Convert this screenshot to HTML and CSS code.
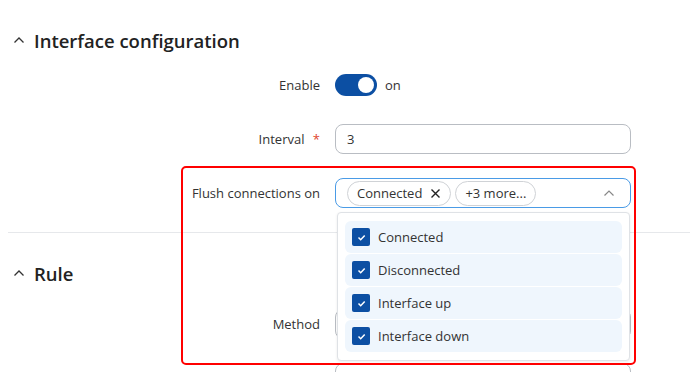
FILE: index.html
```html
<!DOCTYPE html>
<html lang="en">
<head>
    <meta charset="UTF-8">
    <meta name="viewport" content="width=device-width, initial-scale=1.0">
    <title>Interface configuration</title>
    <link rel="stylesheet" href="styles.css">
</head>
<body>
    <div class="page">
        <section class="section">
            <h2 class="section-title">
                <svg class="chevron" width="12" height="8" viewBox="0 0 12 8"><path d="M1.5 6.5 L6 2 L10.5 6.5" fill="none" stroke="#333" stroke-width="1.3"/></svg>
                Interface configuration
            </h2>

            <div class="form-row">
                <label class="form-label">Enable</label>
                <div class="form-control toggle-wrap">
                    <span class="toggle"><span class="knob"></span></span>
                    <span class="toggle-text">on</span>
                </div>
            </div>

            <div class="form-row">
                <label class="form-label">Interval <span class="required">*</span></label>
                <div class="form-control">
                    <div class="input">3</div>
                </div>
            </div>

            <div class="form-row">
                <label class="form-label">Flush connections on</label>
                <div class="form-control">
                    <div class="input multiselect">
                        <span class="chip">Connected
                            <svg width="11" height="11" viewBox="0 0 11 11"><path d="M1.5 1.5 L9.5 9.5 M9.5 1.5 L1.5 9.5" stroke="#222" stroke-width="1.4"/></svg>
                        </span>
                        <span class="chip">+3 more...</span>
                        <svg class="select-arrow" width="12" height="8" viewBox="0 0 12 8"><path d="M1.5 6.5 L6 2 L10.5 6.5" fill="none" stroke="#888" stroke-width="1.2"/></svg>
                    </div>
                </div>
            </div>
        </section>

        <section class="section section-rule">
            <h2 class="section-title">
                <svg class="chevron" width="12" height="8" viewBox="0 0 12 8"><path d="M1.5 6.5 L6 2 L10.5 6.5" fill="none" stroke="#333" stroke-width="1.3"/></svg>
                Rule
            </h2>

            <div class="form-row">
                <label class="form-label">Method</label>
                <div class="form-control">
                    <div class="input"></div>
                </div>
            </div>

            <div class="form-row">
                <label class="form-label"></label>
                <div class="form-control">
                    <div class="input"></div>
                </div>
            </div>
        </section>

        <div class="dropdown">
            <div class="option"><span class="checkbox"><svg width="11" height="9" viewBox="0 0 11 9"><path d="M2.5 4.5 L4.7 6.7 L8.7 2.5" fill="none" stroke="#fff" stroke-width="1.5"/></svg></span>Connected</div>
            <div class="option"><span class="checkbox"><svg width="11" height="9" viewBox="0 0 11 9"><path d="M2.5 4.5 L4.7 6.7 L8.7 2.5" fill="none" stroke="#fff" stroke-width="1.5"/></svg></span>Disconnected</div>
            <div class="option"><span class="checkbox"><svg width="11" height="9" viewBox="0 0 11 9"><path d="M2.5 4.5 L4.7 6.7 L8.7 2.5" fill="none" stroke="#fff" stroke-width="1.5"/></svg></span>Interface up</div>
            <div class="option"><span class="checkbox"><svg width="11" height="9" viewBox="0 0 11 9"><path d="M2.5 4.5 L4.7 6.7 L8.7 2.5" fill="none" stroke="#fff" stroke-width="1.5"/></svg></span>Interface down</div>
        </div>

        <div class="highlight"></div>
    </div>
</body>
</html>
```

FILE: styles.css
```css
:root {
    --text: #333;
    --blue: #0c4fa3;
    --focus: #4a9be6;
    --line: #e6e8eb;
    --border: #b9bdc3;
}

body {
    margin: 0;
    background: #fff;
    font-family: 'Open Sans', 'Noto Sans', sans-serif;
    font-size: 13px;
    color: var(--text);
    overflow: hidden;
}

.page {
    position: relative;
    width: 690px;
    height: 372px;
    overflow: hidden;
}

.section {
    padding: 26px 0 0 0;
}

.section-rule {
    margin-left: 8px;
    margin-top: 21px;
    border-top: 1px solid var(--line);
    padding-top: 26px;
}

.section-title {
    display: flex;
    align-items: center;
    gap: 9px;
    margin: 0 0 16px 13px;
    height: 28px;
    font-size: 18.5px;
    font-weight: 600;
    color: #222;
}

.section-rule .section-title {
    margin-left: 5px;
    margin-bottom: 22px;
}

.form-row {
    display: flex;
    align-items: center;
    gap: 15px;
    height: 30px;
    margin-bottom: 24px;
}

.section-rule .form-row {
    margin-left: -8px;
}

.form-label {
    width: 320px;
    text-align: right;
    flex-shrink: 0;
}

.required {
    color: #e0442d;
    margin-left: 5px;
}

.form-control {
    width: 296px;
}

.toggle-wrap {
    display: flex;
    align-items: center;
    gap: 8px;
}

.toggle {
    position: relative;
    width: 42px;
    height: 22px;
    border-radius: 11px;
    background: var(--blue);
}

.knob {
    position: absolute;
    right: 3px;
    top: 3px;
    width: 16px;
    height: 16px;
    border-radius: 50%;
    background: #fff;
}

.input {
    box-sizing: border-box;
    height: 30px;
    border: 1px solid var(--border);
    border-radius: 8px;
    padding: 0 11px;
    display: flex;
    align-items: center;
}

.multiselect {
    border-color: var(--focus);
    padding: 0 11px;
    gap: 4px;
}

.chip {
    display: inline-flex;
    align-items: center;
    gap: 8px;
    height: 25px;
    box-sizing: border-box;
    padding: 0 9px;
    border: 1px solid #cfd2d6;
    border-radius: 13px;
}

.select-arrow {
    margin-left: auto;
    margin-right: 4px;
}

.dropdown {
    position: absolute;
    left: 337px;
    top: 212px;
    width: 293px;
    box-sizing: border-box;
    padding: 8px 7px 8px 7px;
    background: #fff;
    border: 1px solid #dfe2e6;
    border-radius: 4px;
    box-shadow: 0 1px 3px rgba(0, 0, 0, 0.08);
    display: flex;
    flex-direction: column;
    gap: 1px;
}

.option {
    display: flex;
    align-items: center;
    gap: 8px;
    height: 32px;
    padding: 0 7px;
    border-radius: 6px;
    background: #eff6fd;
}

.checkbox {
    width: 18px;
    height: 18px;
    border-radius: 2px;
    background: var(--blue);
    display: flex;
    align-items: center;
    justify-content: center;
}

.highlight {
    position: absolute;
    left: 181px;
    top: 166px;
    width: 455px;
    height: 199px;
    box-sizing: border-box;
    border: 2px solid #f00;
    border-radius: 5px;
}
```
